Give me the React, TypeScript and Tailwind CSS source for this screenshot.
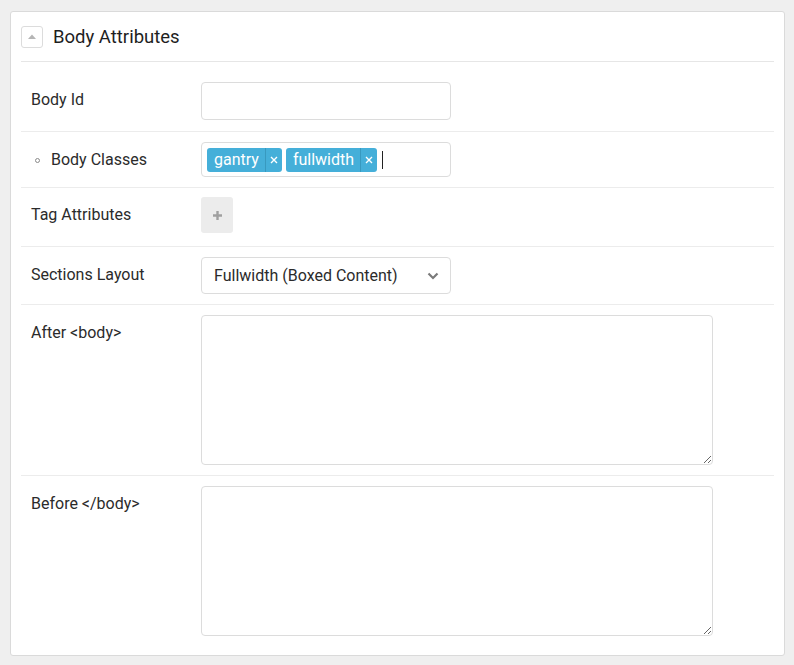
import React from "react";

const font = { fontFamily: "Roboto, 'Liberation Sans', sans-serif" };

function Row({
  label,
  children,
  pt,
  pb,
  last,
  bullet,
}: {
  label: string;
  children: React.ReactNode;
  pt: string;
  pb: string;
  last?: boolean;
  bullet?: boolean;
}) {
  return (
    <div className={`flex items-start ${pt} ${pb} ${last ? "" : "border-b border-[#ececec]"}`}>
      <div className="w-[180px] shrink-0 pl-[10px] pt-[2px] text-[16px] leading-[32px] text-[#2b2b2b] flex items-center">
        {bullet && (
          <span className="inline-block w-[5px] h-[5px] rounded-full border border-[#8a8a8a] ml-[4px] mr-[11px]" />
        )}
        {label}
      </div>
      <div className="flex-1">{children}</div>
    </div>
  );
}

function Tag({ text }: { text: string }) {
  return (
    <span className="inline-flex items-stretch h-[24px] rounded-[3px] bg-[#45afd9] text-white text-[16px] leading-[24px]">
      <span className="pl-[7px] pr-[6px]">{text}</span>
      <span className="border-l border-[#3899bf] w-[17px] flex items-center justify-center">
        <svg width="8" height="8" viewBox="0 0 8 8">
          <path d="M1 1 L7 7 M7 1 L1 7" stroke="#ffffff" strokeWidth="1.4" />
        </svg>
      </span>
    </span>
  );
}

export default function App() {
  return (
    <div className="min-h-[665px] bg-[#efefef] pt-[11px] pl-[10px]" style={font}>
      <div className="w-[775px] h-[645px] bg-white border border-[#dadada] rounded-[3px] px-[10px]">
        <div className="flex items-center h-[50px] border-b border-[#e6e6e6]">
          <div className="w-[22px] h-[22px] border border-[#dcdcdc] rounded-[3px] flex items-center justify-center">
            <svg width="8" height="5" viewBox="0 0 8 5">
              <path d="M0 5 L4 0.5 L8 5 Z" fill="#b5b5b5" />
            </svg>
          </div>
          <div className="ml-[10px] mt-[3px] text-[18.5px] text-[#1e1e1e] font-normal">Body Attributes</div>
        </div>

        <Row label="Body Id" pt="pt-[20px]" pb="pb-[11px]">
          <div className="w-[250px] h-[38px] border border-[#dcdcdc] rounded-[4px]" />
        </Row>

        <Row label="Body Classes" bullet pt="pt-[10px]" pb="pb-[10px]">
          <div className="w-[250px] h-[35px] border border-[#dcdcdc] rounded-[4px] flex items-center pl-[5px] gap-[4px]">
            <Tag text="gantry" />
            <Tag text="fullwidth" />
            <span className="ml-[1px] w-px h-[18px] bg-[#222]" />
          </div>
        </Row>

        <Row label="Tag Attributes" pt="pt-[9px]" pb="pb-[13px]">
          <div className="w-[32px] h-[36px] bg-[#ececec] rounded-[3px] flex items-center justify-center">
            <svg width="11" height="11" viewBox="0 0 11 11">
              <path d="M5.5 1 V10 M1 5.5 H10" stroke="#a0a0a0" strokeWidth="2.4" />
            </svg>
          </div>
        </Row>

        <Row label="Sections Layout" pt="pt-[10px]" pb="pb-[10px]">
          <div className="w-[250px] h-[37px] border border-[#dcdcdc] rounded-[4px] flex items-center pl-[12px] pr-[11px] text-[16px] text-[#2b2b2b]">
            <span className="flex-1">Fullwidth (Boxed Content)</span>
            <svg width="12" height="8" viewBox="0 0 12 8">
              <path d="M1.5 1.5 L6 6 L10.5 1.5" stroke="#7a7a7a" strokeWidth="2.2" fill="none" />
            </svg>
          </div>
        </Row>

        <Row label="After <body>" pt="pt-[10px]" pb="pb-[10px]">
          <textarea className="block w-[512px] h-[150px] border border-[#dcdcdc] rounded-[4px] outline-none" />
        </Row>

        <Row label="Before </body>" last pt="pt-[10px]" pb="pb-[10px]">
          <textarea className="block w-[512px] h-[150px] border border-[#dcdcdc] rounded-[4px] outline-none" />
        </Row>
      </div>
    </div>
  );
}
